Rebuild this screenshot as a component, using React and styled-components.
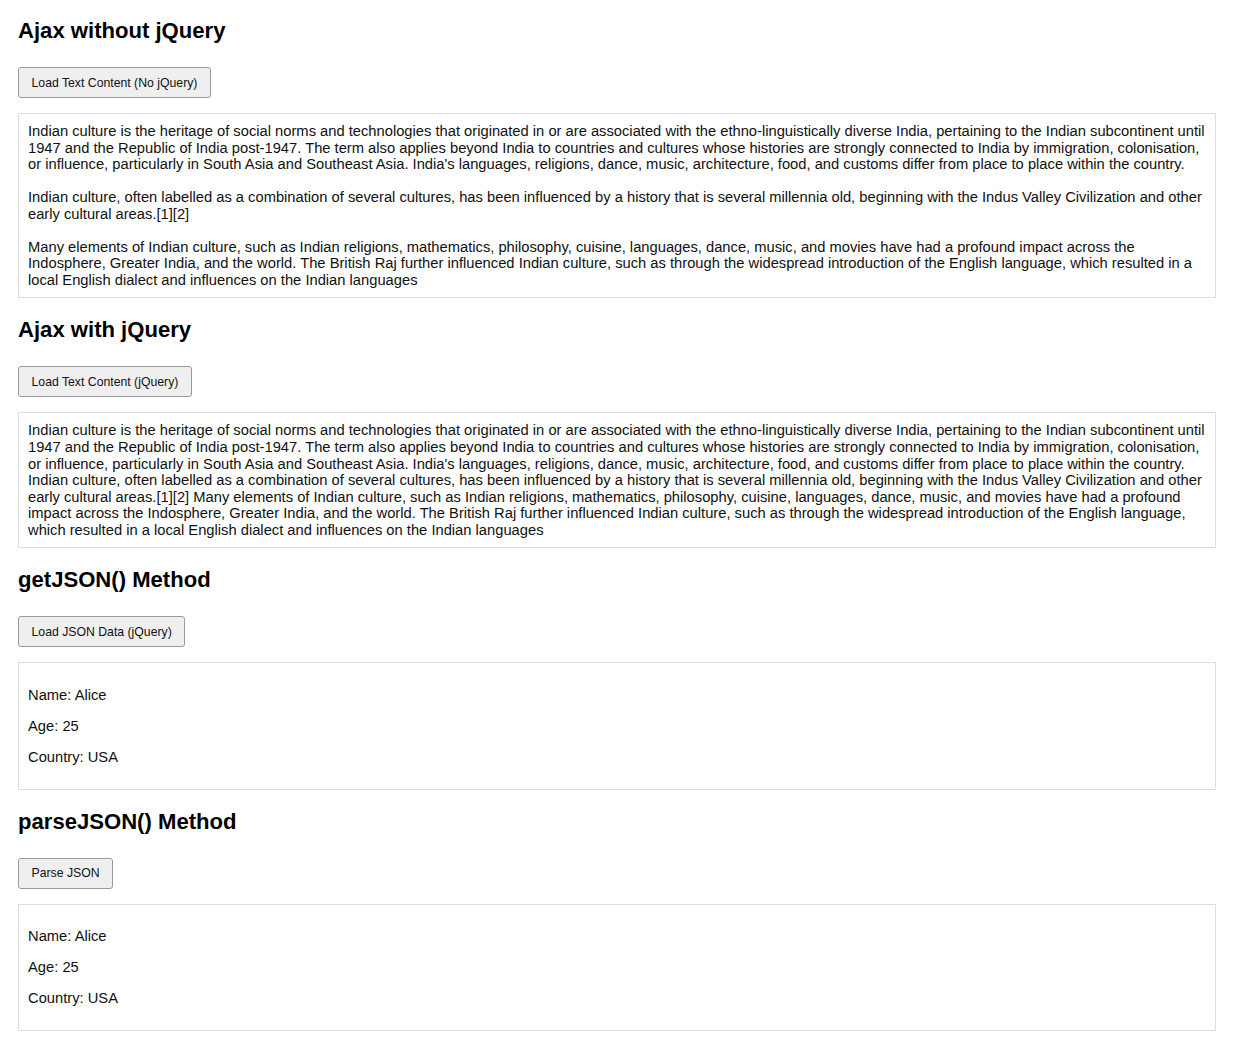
import React from "react";
import styled, { createGlobalStyle } from "styled-components";

const GlobalStyle = createGlobalStyle`
  html, body {
    margin: 0;
    padding: 0;
    background: #ffffff;
  }
  body {
    font-family: "Liberation Sans", Arial, sans-serif;
    color: #111;
  }
`;

const Page = styled.div`
  padding: 18px;
  padding-top: 18px;
`;

const Section = styled.section`
  margin-bottom: 19px;
`;

const Heading = styled.h2`
  font-size: 22.1px;
  line-height: 25px;
  font-weight: 700;
  color: #000;
  margin: 0 0 24px;
`;

const Button = styled.button`
  display: block;
  font-family: "Liberation Sans", Arial, sans-serif;
  font-size: 12.25px;
  line-height: 14px;
  color: #111;
  background: #efefef;
  border: 1px solid #9a9a9a;
  border-radius: 3px;
  padding: 7.5px 12.5px;
  margin: 0 0 15px;
  cursor: pointer;
`;

const Box = styled.div`
  border: 1px solid #dedede;
  padding: 9px;
  font-size: 14.72px;
  line-height: 16.55px;
  color: #111;
`;

const Field = styled.p`
  margin: 14.4px 0;
`;

const paragraphs = [
  "Indian culture is the heritage of social norms and technologies that originated in or are associated with the ethno-linguistically diverse India, pertaining to the Indian subcontinent until 1947 and the Republic of India post-1947. The term also applies beyond India to countries and cultures whose histories are strongly connected to India by immigration, colonisation, or influence, particularly in South Asia and Southeast Asia. India's languages, religions, dance, music, architecture, food, and customs differ from place to place within the country.",
  "Indian culture, often labelled as a combination of several cultures, has been influenced by a history that is several millennia old, beginning with the Indus Valley Civilization and other early cultural areas.[1][2]",
  "Many elements of Indian culture, such as Indian religions, mathematics, philosophy, cuisine, languages, dance, music, and movies have had a profound impact across the Indosphere, Greater India, and the world. The British Raj further influenced Indian culture, such as through the widespread introduction of the English language, which resulted in a local English dialect and influences on the Indian languages",
];

const person = { name: "Alice", age: 25, country: "USA" };

function PersonFields() {
  return (
    <Box>
      <Field>Name: {person.name}</Field>
      <Field>Age: {person.age}</Field>
      <Field>Country: {person.country}</Field>
    </Box>
  );
}

export default function App() {
  return (
    <>
      <GlobalStyle />
      <Page>
        <Section>
          <Heading>Ajax without jQuery</Heading>
          <Button>Load Text Content (No jQuery)</Button>
          <Box>
            {paragraphs.map((p, i) => (
              <React.Fragment key={i}>
                {i > 0 && (
                  <>
                    <br />
                    <br />
                  </>
                )}
                {p}
              </React.Fragment>
            ))}
          </Box>
        </Section>

        <Section>
          <Heading>Ajax with jQuery</Heading>
          <Button>Load Text Content (jQuery)</Button>
          <Box>{paragraphs.join(" ")}</Box>
        </Section>

        <Section>
          <Heading>getJSON() Method</Heading>
          <Button>Load JSON Data (jQuery)</Button>
          <PersonFields />
        </Section>

        <Section>
          <Heading>parseJSON() Method</Heading>
          <Button>Parse JSON</Button>
          <PersonFields />
        </Section>
      </Page>
    </>
  );
}
